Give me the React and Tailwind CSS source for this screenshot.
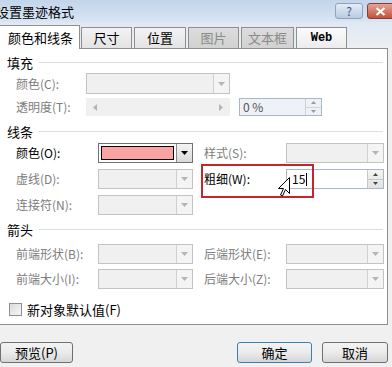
import React from "react";

const font = { fontFamily: '"Noto Sans CJK SC", "Liberation Sans", sans-serif' };

function Arrow({ enabled = false }) {
  return (
    <div
      className={`w-[16px] h-full flex items-center justify-center border-l ${
        enabled ? "bg-gradient-to-b from-[#f4f4f4] to-[#d9d9d9] border-[#8a8a8a]" : "bg-[#f4f4f4] border-[#d0d0d0]"
      }`}
    >
      <svg width="7" height="4" viewBox="0 0 7 4">
        <polygon points="0,0 7,0 3.5,4" fill={enabled ? "#000" : "#b4b4b4"} />
      </svg>
    </div>
  );
}

function Combo({ w, h = 20, children, enabled = false }) {
  return (
    <div
      className={`flex border ${enabled ? "border-[#707070] bg-white" : "border-[#c3c3c3] bg-[#f0f0f0]"}`}
      style={{ width: w, height: h }}
    >
      <div className="flex-1 flex items-center px-[2px]">{children}</div>
      <Arrow enabled={enabled} />
    </div>
  );
}

function Label({ children, w, enabled = false }) {
  return (
    <div
      className={`text-[12px] leading-none whitespace-nowrap ${enabled ? "text-black" : "text-[#7d7d7d]"}`}
      style={{ width: w }}
    >
      {children}
    </div>
  );
}

function Header({ title, className }) {
  return (
    <div className={`flex items-center h-[20px] pl-[7px] pr-[4px] ${className}`}>
      <span className="text-[13px] leading-none text-black">{title}</span>
      <div className="flex-1 ml-[6px] h-px bg-[#d5dfe5]" />
    </div>
  );
}

function Tab({ children, w, kind }) {
  const styles = {
    normal: "bg-gradient-to-b from-[#f3f3f3] to-[#e3e3e3] text-black",
    disabled: "bg-gradient-to-b from-[#dcdcdc] to-[#d2d2d2] text-[#8a8a8a]",
    web: "bg-gradient-to-b from-[#fbfbfb] to-[#ececec] text-black",
  };
  return (
    <div
      className={`h-[21px] mr-[2px] border border-b-0 border-[#8e8f8f] flex items-center justify-center text-[13px] ${styles[kind]}`}
      style={{ width: w }}
    >
      {children}
    </div>
  );
}

function Button({ children, w, primary = false }) {
  return (
    <div
      className={`h-[21px] rounded-[3px] border flex items-center justify-center text-[13px] text-black bg-gradient-to-b from-[#f3f3f3] via-[#ebebeb] to-[#d6d6d6] ${
        primary ? "border-[#3c7fb1]" : "border-[#707070]"
      }`}
      style={{ width: w }}
    >
      {children}
    </div>
  );
}

export default function App() {
  return (
    <div className="w-[392px] h-[367px] bg-[#f0f0f0] overflow-hidden relative flex flex-col" style={font}>
      {/* title bar */}
      <div className="h-[22px] flex items-center bg-gradient-to-b from-[#c3d5eb] to-[#d9e5f3]">
        <span className="ml-[-4px] text-[13px] text-black leading-none">设置墨迹格式</span>
        <div className="flex-1" />
        <div className="w-[28px] h-[16px] mr-[4px] rounded-[3px] border border-[#8ea3bd] bg-gradient-to-b from-[#e4ecf6] to-[#b9cbe1] flex items-center justify-center text-[12px] text-[#3d5674] leading-none">
          ?
        </div>
        <div className="w-[27px] h-[16px] mr-[-2px] rounded-l-[3px] border border-[#8b3a3a] bg-gradient-to-b from-[#e5a293] to-[#c4513b] flex items-center justify-center">
          <svg width="11" height="9" viewBox="0 0 11 9">
            <path d="M1.5 1 L9.5 8 M9.5 1 L1.5 8" stroke="#fff" strokeWidth="2.2" />
          </svg>
        </div>
      </div>

      {/* tabs */}
      <div className="h-[26px] flex items-end bg-gradient-to-b from-[#dfe8f3] to-[#eceff3] relative">
        <div className="w-[80px] h-[24px] mr-[1px] -mb-px relative z-10 bg-white border border-b-0 border-[#8e8f8f] border-l-0 flex items-center pl-[8px] text-[13px] text-black">
          颜色和线条
        </div>
        <Tab w={51} kind="normal">尺寸</Tab>
        <Tab w={52} kind="normal">位置</Tab>
        <Tab w={51} kind="disabled">图片</Tab>
        <Tab w={53} kind="disabled">文本框</Tab>
        <Tab w={51} kind="web">
          <span className="text-[12px] font-bold" style={{ fontFamily: '"Liberation Mono", monospace' }}>
            Web
          </span>
        </Tab>
      </div>

      {/* panel */}
      <div className="w-[388px] h-[277px] bg-white border border-l-0 border-[#8e8f8f] flex flex-col">
        <Header title="填充" className="mt-[3px]" />
        <div className="flex items-center h-[21px] mt-[1px] pl-[16px]">
          <Label w={70}>颜色(C):</Label>
          <Combo w={144} h={21} />
        </div>
        <div className="flex items-center h-[18px] mt-[4px] pl-[16px]">
          <Label w={70}>透明度(T):</Label>
          <div className="w-[144px] h-[18px] bg-[#f0f0f0] flex items-center justify-between px-[7px]">
            <svg width="4" height="7" viewBox="0 0 4 7">
              <polygon points="4,0 4,7 0,3.5" fill="#b4b4b4" />
            </svg>
            <svg width="4" height="7" viewBox="0 0 4 7">
              <polygon points="0,0 0,7 4,3.5" fill="#b4b4b4" />
            </svg>
          </div>
          <div className="ml-[9px] w-[83px] h-[18px] border border-[#a9b6c5] bg-[#eef1f5] flex">
            <div className="flex-1 flex items-center pl-[3px] text-[12px] text-[#555] leading-none">0 %</div>
            <div className="w-[16px] border-l border-[#d0d0d0] flex flex-col">
              <div className="flex-1 flex items-center justify-center border-b border-[#d5d5d5]">
                <svg width="5" height="3" viewBox="0 0 5 3"><polygon points="0,3 5,3 2.5,0" fill="#9a9a9a" /></svg>
              </div>
              <div className="flex-1 flex items-center justify-center">
                <svg width="5" height="3" viewBox="0 0 5 3"><polygon points="0,0 5,0 2.5,3" fill="#9a9a9a" /></svg>
              </div>
            </div>
          </div>
        </div>

        <Header title="线条" className="mt-[5px]" />
        <div className="flex items-center h-[20px] mt-[2px] pl-[16px]">
          <Label w={82} enabled>颜色(O):</Label>
          <Combo w={95} enabled>
            <div className="w-full h-[14px] bg-[#f9a3a3] border border-black" />
          </Combo>
          <div className="ml-[11px]">
            <Label w={82}>样式(S):</Label>
          </div>
          <Combo w={98} />
        </div>
        <div className="flex items-center h-[20px] mt-[6px] pl-[16px]">
          <Label w={82}>虚线(D):</Label>
          <Combo w={95} />
          <div className="ml-[11px]">
            <Label w={82} enabled>粗细(W):</Label>
          </div>
          <div className="w-[98px] h-[20px] border border-[#a9b6c5] bg-white flex">
            <div className="flex-1 flex items-center pl-[5px] text-[12px] text-black leading-none">
              15<span className="ml-px w-px h-[13px] bg-black" />
            </div>
            <div className="w-[16px] flex flex-col bg-gradient-to-b from-[#f4f4f4] to-[#e2e2e2] border-l border-[#c8c8c8]">
              <div className="flex-1 flex items-center justify-center border-b border-[#c8c8c8]">
                <svg width="5" height="3" viewBox="0 0 5 3"><polygon points="0,3 5,3 2.5,0" fill="#444" /></svg>
              </div>
              <div className="flex-1 flex items-center justify-center">
                <svg width="5" height="3" viewBox="0 0 5 3"><polygon points="0,0 5,0 2.5,3" fill="#444" /></svg>
              </div>
            </div>
          </div>
        </div>
        <div className="flex items-center h-[20px] mt-[6px] pl-[16px]">
          <Label w={82}>连接符(N):</Label>
          <Combo w={95} />
        </div>

        <Header title="箭头" className="mt-[4px]" />
        <div className="flex items-center h-[20px] mt-[5px] pl-[16px]">
          <Label w={82}>前端形状(B):</Label>
          <Combo w={95} />
          <div className="ml-[11px]">
            <Label w={82}>后端形状(E):</Label>
          </div>
          <Combo w={98} />
        </div>
        <div className="flex items-center h-[20px] mt-[5px] pl-[16px]">
          <Label w={82}>前端大小(I):</Label>
          <Combo w={95} />
          <div className="ml-[11px]">
            <Label w={82}>后端大小(Z):</Label>
          </div>
          <Combo w={98} />
        </div>

        <div className="flex items-center h-[20px] mt-[10px] pl-[9px]">
          <div className="w-[13px] h-[13px] border border-[#8e8f8f] bg-gradient-to-br from-[#dcdcdc] to-[#f6f6f6] mr-[5px]" />
          <span className="text-[13px] text-black leading-none">新对象默认值(F)</span>
        </div>
      </div>

      {/* footer */}
      <div className="flex-1 flex items-start pt-[17px] pr-[4px]">
        <Button w={73}>预览(P)</Button>
        <div className="flex-1" />
        <Button w={75} primary>确定</Button>
        <div className="w-[10px]" />
        <Button w={66}>取消</Button>
      </div>

      {/* annotation box */}
      <div className="absolute left-[201px] top-[164px] w-[113px] h-[34px] border-2 border-[#c1272d]" />

      {/* mouse cursor */}
      <svg className="absolute left-[278px] top-[177px]" width="13" height="20" viewBox="0 0 13 20">
        <polygon points="11.5,0.5 11.5,16.5 7.5,12.5 4.5,19 2.5,18 5.5,11.5 0.5,11.5" fill="#fff" stroke="#000" strokeWidth="1" />
      </svg>
    </div>
  );
}
